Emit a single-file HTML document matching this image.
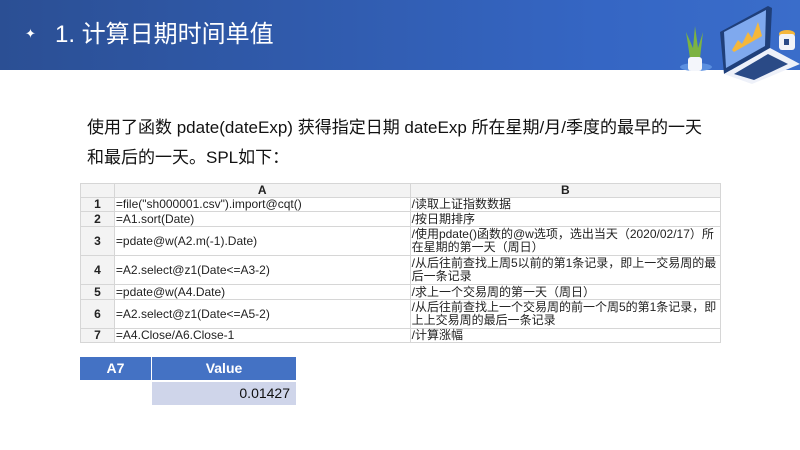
<!DOCTYPE html>
<html><head><meta charset="utf-8"><style>
*{margin:0;padding:0;box-sizing:border-box}
body{width:800px;height:450px;overflow:hidden;background:#fff;font-family:"Liberation Sans","Noto Sans CJK SC",sans-serif;position:relative}
.hdr{position:absolute;left:0;top:0;width:800px;height:70px;background:linear-gradient(90deg,#2b4f94 0%,#3566c4 75%,#3a6dca 100%)}
.ttl{position:absolute;left:55px;top:18px;color:#fff;font-size:24px;line-height:34px}
.star{position:absolute;left:25px;top:26px;color:#fff;font-size:13px}
.p{position:absolute;left:87px;top:113px;font-size:17px;line-height:30px;color:#111;width:640px}
table{border-collapse:collapse;position:absolute}
.t td{border:1px solid #d6d6d6;font-size:12px;line-height:13px;color:#222;padding:0 1px;vertical-align:middle}
.t td.n{background:#f3f3f3;text-align:center;font-weight:bold;font-size:12px}
.t tr.h td{background:#f3f3f3;text-align:center;font-weight:bold}
</style></head><body>
<div class="hdr"></div>
<div class="star">✦</div>
<div class="ttl">1. 计算日期时间单值</div>
<svg style="position:absolute;left:676px;top:2px" width="124" height="82" viewBox="0 0 124 82">
<ellipse cx="20" cy="65" rx="16" ry="4" fill="#5b8fe0"/>
<path d="M14 56 L10 30 L17 46 L19 24 L22 46 L27 30 L24 56Z" fill="#7cb342"/>
<rect x="12" y="55" width="14" height="14" rx="3" fill="#f4f6fb"/>
<path d="M44 30 L92 4 L96 6 L94 46 L48 72 Z" fill="#1f3f7a"/>
<path d="M48 30 L90 8 L89 44 L50 66 Z" fill="#7fa9ee"/>
<path d="M56 48 L62 38 L66 42 L72 30 L76 36 L82 20 L86 34 L58 50Z" fill="#f5b73b"/>
<path d="M48 72 L94 46 L124 62 L76 82 Z" fill="#eef1f9"/>
<path d="M58 72 L92 52 L112 62 L78 78Z" fill="#2a4a86"/>
<ellipse cx="111" cy="32" rx="8" ry="4" fill="#f5b73b"/>
<rect x="103" y="32" width="16" height="16" rx="3" fill="#f1f3f8"/>
<rect x="108" y="37" width="5" height="6" fill="#2a4a86"/>
</svg>
<div class="p">使用了函数 pdate(dateExp) 获得指定日期 dateExp 所在星期/月/季度的最早的一天<br>和最后的一天。SPL如下：</div>
<table class="t" style="left:80px;top:183px;width:641px">
<colgroup><col style="width:34px"><col style="width:296px"><col style="width:311px"></colgroup>
<tr class="h" style="height:14px"><td></td><td>A</td><td>B</td></tr>
<tr style="height:14px"><td class="n">1</td><td>=file("sh000001.csv").import@cqt()</td><td>/读取上证指数数据</td></tr>
<tr style="height:15px"><td class="n">2</td><td>=A1.sort(Date)</td><td>/按日期排序</td></tr>
<tr style="height:29px"><td class="n">3</td><td>=pdate@w(A2.m(-1).Date)</td><td>/使用pdate()函数的@w选项，选出当天（2020/02/17）所在星期的第一天（周日）</td></tr>
<tr style="height:29px"><td class="n">4</td><td>=A2.select@z1(Date&lt;=A3-2)</td><td>/从后往前查找上周5以前的第1条记录，即上一交易周的最后一条记录</td></tr>
<tr style="height:15px"><td class="n">5</td><td>=pdate@w(A4.Date)</td><td>/求上一个交易周的第一天（周日）</td></tr>
<tr style="height:29px"><td class="n">6</td><td>=A2.select@z1(Date&lt;=A5-2)</td><td>/从后往前查找上一个交易周的前一个周5的第1条记录，即上上交易周的最后一条记录</td></tr>
<tr style="height:14px"><td class="n">7</td><td>=A4.Close/A6.Close-1</td><td>/计算涨幅</td></tr>
</table>
<div style="position:absolute;left:80px;top:357px;width:71px;height:23px;background:#4472c4;color:#fff;font-weight:bold;font-size:14px;line-height:23px;text-align:center">A7</div>
<div style="position:absolute;left:152px;top:357px;width:144px;height:23px;background:#4472c4;color:#fff;font-weight:bold;font-size:14px;line-height:23px;text-align:center">Value</div>
<div style="position:absolute;left:152px;top:382px;width:144px;height:23px;background:#cfd5ea;color:#111;font-size:14px;line-height:23px;text-align:right;padding-right:6px">0.01427</div>
</body></html>
